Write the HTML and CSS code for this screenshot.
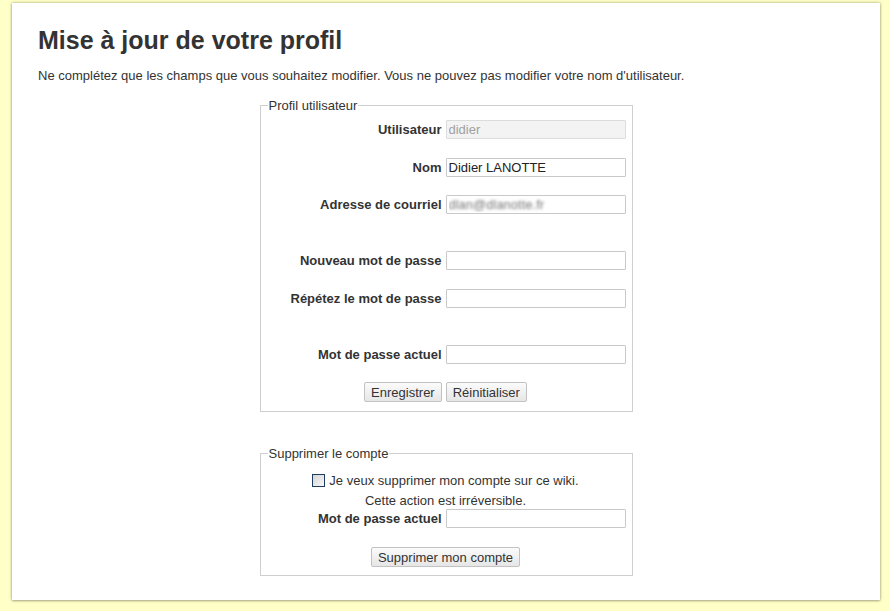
FILE: index.html
```html
<!DOCTYPE html>
<html lang="fr">
<head>
<meta charset="utf-8">
<title>Mise à jour de votre profil</title>
<link rel="stylesheet" href="styles.css">
</head>
<body>
<main class="panel">
  <h1 class="title">Mise à jour de votre profil</h1>
  <p class="intro">Ne complétez que les champs que vous souhaitez modifier. Vous ne pouvez pas modifier votre nom d'utilisateur.</p>

  <fieldset class="box box-profile">
    <legend>Profil utilisateur</legend>
    <div class="grid">
      <label class="lbl">Utilisateur</label>
      <input class="field field-disabled" type="text" value="didier" disabled>

      <label class="lbl">Nom</label>
      <input class="field" type="text" value="Didier LANOTTE">

      <label class="lbl">Adresse de courriel</label>
      <input class="field field-blur" type="text" value="dlan@dlanotte.fr">

      <div class="spacer"></div>

      <label class="lbl">Nouveau mot de passe</label>
      <input class="field" type="password">

      <label class="lbl">Répétez le mot de passe</label>
      <input class="field" type="password">

      <div class="spacer"></div>

      <label class="lbl">Mot de passe actuel</label>
      <input class="field" type="password">

      <div class="actions">
        <button class="btn" type="button">Enregistrer</button>
        <button class="btn" type="button">Réinitialiser</button>
      </div>
    </div>
  </fieldset>

  <fieldset class="box box-delete">
    <legend>Supprimer le compte</legend>
    <div class="check-row">
      <input class="check" type="checkbox" id="del">
      <label for="del">Je veux supprimer mon compte sur ce wiki.</label>
    </div>
    <div class="note">Cette action est irréversible.</div>
    <div class="grid">
      <label class="lbl">Mot de passe actuel</label>
      <input class="field" type="password">
    </div>
    <div class="actions actions-delete">
      <button class="btn" type="button">Supprimer mon compte</button>
    </div>
  </fieldset>
</main>
</body>
</html>
```

FILE: styles.css
```css
html, body {
  margin: 0;
  padding: 0;
}

body {
  background: #ffffc8;
  font-family: "Liberation Sans", Arial, sans-serif;
  color: #333;
  height: 611px;
  overflow: hidden;
}

.panel {
  margin: 3px 10px 0 12px;
  height: 597px;
  box-sizing: border-box;
  background: #fff;
  box-shadow: 0 0 3px rgba(0, 0, 0, 0.35), 0 1px 2px rgba(0, 0, 0, 0.2);
  padding: 23px 26px 0 26px;
}

.title {
  margin: 0;
  font-size: 25px;
  line-height: 29px;
  font-weight: bold;
  color: #333;
}

.intro {
  margin: 13px 0 0 0;
  font-size: 13px;
  line-height: 15px;
  color: #333;
}

.box {
  width: 373px;
  box-sizing: border-box;
  margin: 0 auto;
  border: 1px solid #cfcfcf;
  padding: 0 6px 0 5px;
}

.box legend {
  font-size: 13px;
  line-height: 15px;
  padding: 0 1px;
  margin-left: 2px;
  color: #333;
}

.box-profile {
  margin-top: 15px;
  padding-top: 7px;
  padding-bottom: 9px;
}

.box-delete {
  margin-top: 34px;
  padding-top: 0;
  padding-bottom: 8px;
}

.grid {
  display: grid;
  grid-template-columns: 1fr 180px;
  column-gap: 4px;
  row-gap: 18.5px;
  align-items: center;
}

.spacer {
  grid-column: 1 / -1;
  height: 0;
}

.lbl {
  text-align: right;
  font-size: 13px;
  line-height: 19px;
  font-weight: bold;
  color: #333;
  white-space: nowrap;
}

.field {
  box-sizing: border-box;
  width: 180px;
  height: 19px;
  margin: 0;
  border: 1px solid #c9c9c9;
  border-radius: 1px;
  padding: 0 2px;
  font-family: "Liberation Sans", Arial, sans-serif;
  font-size: 13px;
  color: #222;
  background: #fff;
  outline: none;
}

.field-disabled {
  background: #f3f3f3;
  border-color: #dcdcdc;
  color: #a0a0a0;
}

.field-blur {
  color: transparent;
  text-shadow: 0 0 3px #777;
}

.actions {
  grid-column: 1 / -1;
  display: flex;
  justify-content: center;
  gap: 4px;
}

.btn {
  box-sizing: border-box;
  height: 20px;
  margin: 0;
  padding: 0 6px;
  font-family: "Liberation Sans", Arial, sans-serif;
  font-size: 13px;
  color: #333;
  border: 1px solid #c2c2c2;
  border-radius: 2px;
  background: linear-gradient(#fbfbfb, #e6e6e6);
}

.check-row {
  margin-top: 9px;
  height: 20px;
  display: flex;
  align-items: center;
  justify-content: center;
  font-size: 13px;
  color: #333;
}

.check {
  appearance: none;
  -webkit-appearance: none;
  width: 13px;
  height: 13px;
  margin: 0 4px 0 0;
  border: 1px solid #1f3c63;
  background: linear-gradient(135deg, #d5d5d5, #f7f7f7);
  box-sizing: border-box;
}

.note {
  height: 19px;
  line-height: 22px;
  text-align: center;
  font-size: 13px;
  color: #333;
}

.actions-delete {
  margin-top: 19px;
}
```
